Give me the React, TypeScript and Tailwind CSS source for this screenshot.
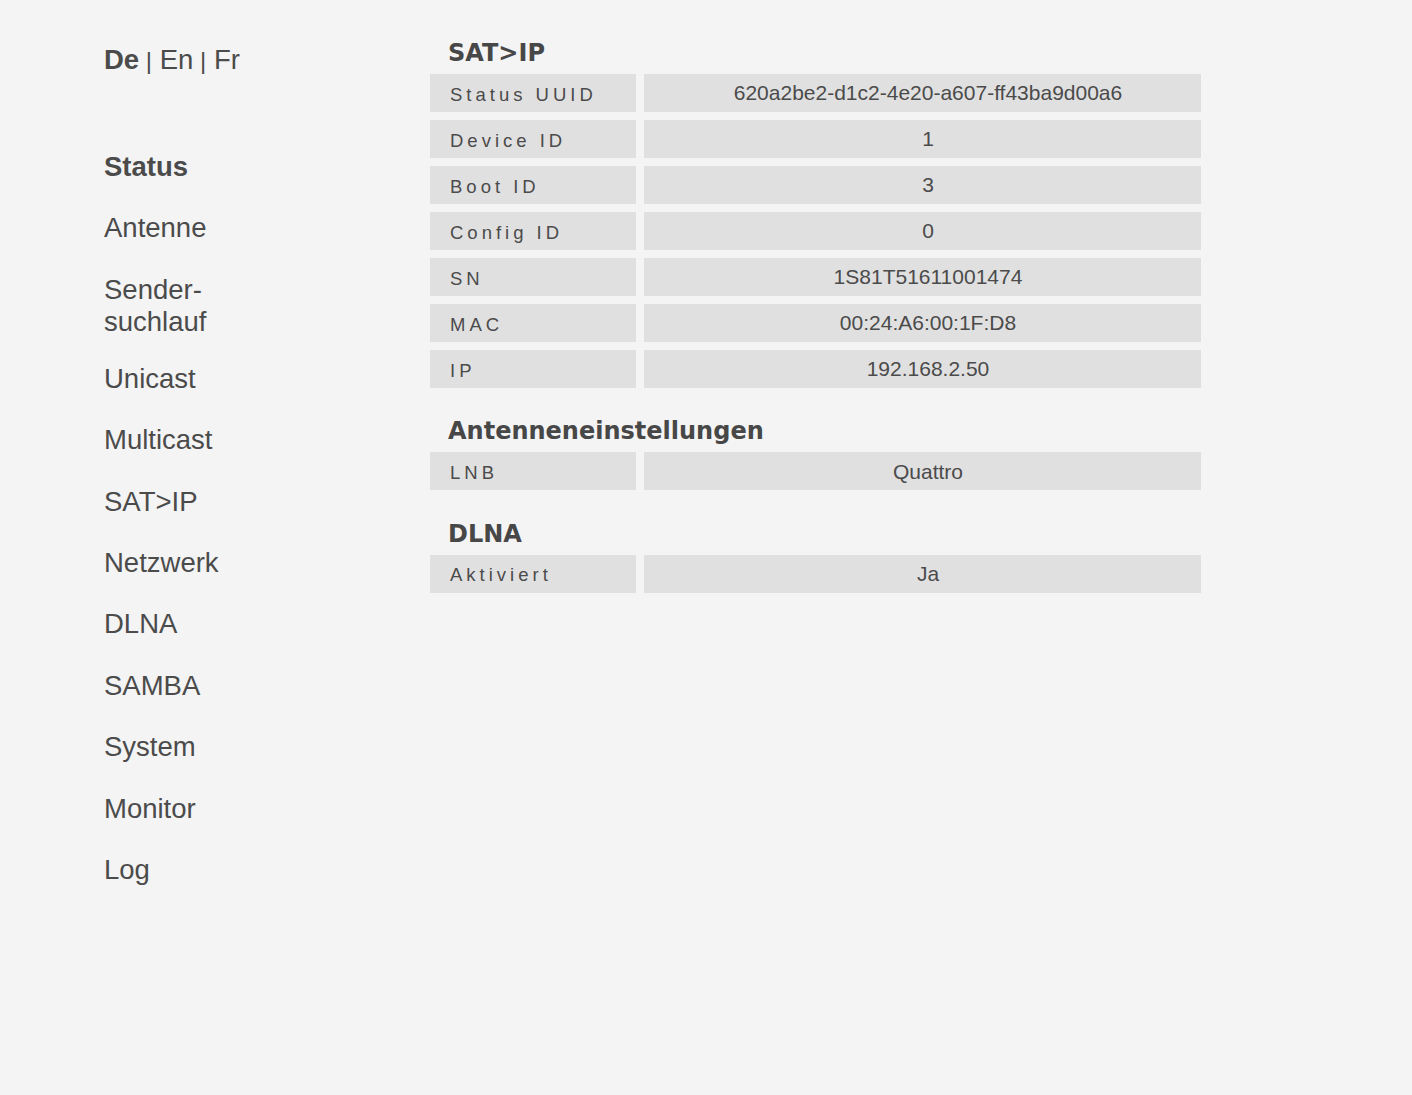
const navItems: { label: string; active?: boolean }[] = [
  { label: "Status", active: true },
  { label: "Antenne" },
  { label: "Sender-\nsuchlauf" },
  { label: "Unicast" },
  { label: "Multicast" },
  { label: "SAT>IP" },
  { label: "Netzwerk" },
  { label: "DLNA" },
  { label: "SAMBA" },
  { label: "System" },
  { label: "Monitor" },
  { label: "Log" },
];

const sections: { title: string; rows: [string, string][] }[] = [
  {
    title: "SAT>IP",
    rows: [
      ["Status UUID", "620a2be2-d1c2-4e20-a607-ff43ba9d00a6"],
      ["Device ID", "1"],
      ["Boot ID", "3"],
      ["Config ID", "0"],
      ["SN", "1S81T51611001474"],
      ["MAC", "00:24:A6:00:1F:D8"],
      ["IP", "192.168.2.50"],
    ],
  },
  {
    title: "Antenneneinstellungen",
    rows: [["LNB", "Quattro"]],
  },
  {
    title: "DLNA",
    rows: [["Aktiviert", "Ja"]],
  },
];

export default function App() {
  return (
    <div
      className="min-h-[1095px] bg-[#f4f4f4] text-[#4b4b4b]"
      style={{ fontFamily: '"Liberation Sans", Arial, sans-serif' }}
    >
      <div className="flex pl-[104px]">
        {/* Sidebar */}
        <div className="w-[326px] shrink-0 pt-[44px]">
          <div className="text-[27.5px] leading-[32px]">
            <a className="font-bold">De</a>
            <span className="text-[24px]"> | </span>
            <a className="ml-[1px]">En</a>
            <span className="text-[24px]"> | </span>
            <a className="ml-[1px]">Fr</a>
          </div>

          <nav className="mt-[74px] flex flex-col gap-[29.4px]">
            {navItems.map((item) => (
              <a
                key={item.label}
                className={
                  "block whitespace-pre-line text-[27.5px] leading-[32px] " +
                  (item.active ? "font-bold" : "") +
                  (item.label.includes("\n") ? " -mb-[4.4px]" : "")
                }
              >
                {item.label}
              </a>
            ))}
          </nav>
        </div>

        {/* Content */}
        <div className="w-[771px] pt-[39px]">
          {sections.map((section, i) => (
            <section key={section.title} className={i > 0 ? "mt-[29.4px]" : ""}>
              <h2
                className="mb-[7px] pl-[18px] text-[24px] font-bold leading-[28px] text-[#474747]"
                style={{ fontFamily: '"DejaVu Sans", Verdana, sans-serif' }}
              >
                {section.title}
              </h2>
              <div className="flex flex-col gap-[8px]">
                {section.rows.map(([label, value]) => (
                  <div key={label} className="grid grid-cols-[206px_557px] gap-[8px]">
                    <div className="flex h-[38px] items-center bg-[#e0e0e0] pl-[20px] pt-[3px] text-[18.5px] tracking-[4px]">
                      {label}
                    </div>
                    <div className="flex h-[38px] items-center justify-center bg-[#e0e0e0] pl-[11px] text-[21px]">
                      {value}
                    </div>
                  </div>
                ))}
              </div>
            </section>
          ))}
        </div>
      </div>
    </div>
  );
}
